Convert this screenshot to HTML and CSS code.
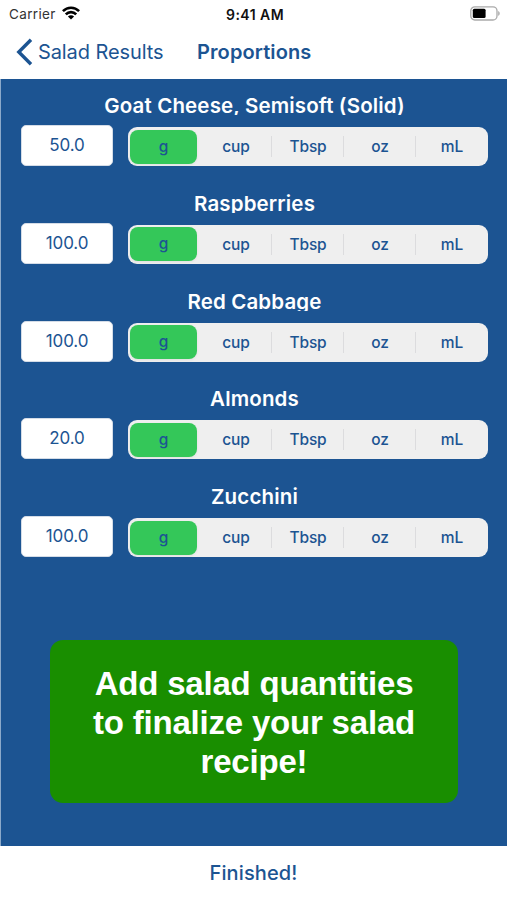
FILE: index.html
```html
<!DOCTYPE html>
<html lang="en">
<head>
<meta charset="utf-8">
<title>Proportions</title>
<link rel="stylesheet" href="styles.css">
</head>
<body>
<div class="screen">
  <header class="top">
    <div class="status">
      <div class="carrier"><span>Carrier</span>
        <svg class="wifi" width="18" height="14" viewBox="0 0 18 14" fill="none" stroke="#000" stroke-width="2.6"><path d="M.9 5.2C5.5.6 12.5.6 17.1 5.2"/><path d="M3.8 8.4c2.9-3 7.5-3 10.4 0"/><path d="M9 13.6 5.9 10.6c1.7-1.7 4.5-1.7 6.2 0z" fill="#000" stroke="none"/></svg>
      </div>
      <span class="clock">9:41 AM</span>
      <svg class="battery" width="31" height="15" viewBox="0 0 31 15"><rect x=".8" y=".8" width="26.2" height="13.2" rx="4" fill="#fff" stroke="#aaa" stroke-width="1.3"/><rect x="2.8" y="2.8" width="12.8" height="9.2" rx="1.5"/><path d="M28.2 5v4.8c2-.8 2-4 0-4.8z" fill="#aaa"/></svg>
    </div>
    <nav class="nav">
      <a class="back"><svg width="17" height="28" viewBox="0 0 17 28" fill="none" stroke="#1c5492" stroke-width="3.4"><path d="M15 1.8 2.8 14 15 26.2"/></svg><span>Salad Results</span></a>
      <h1>Proportions</h1>
    </nav>
  </header>
  <main>
    <section class="item"><h2>Goat Cheese, Semisoft (Solid)</h2><div class="controls"><div class="amount">50.0</div><div class="units"><span class="on">g</span><span>cup</span><span>Tbsp</span><span>oz</span><span>mL</span></div></div></section>
    <section class="item"><h2>Raspberries</h2><div class="controls"><div class="amount">100.0</div><div class="units"><span class="on">g</span><span>cup</span><span>Tbsp</span><span>oz</span><span>mL</span></div></div></section>
    <section class="item"><h2>Red Cabbage</h2><div class="controls"><div class="amount">100.0</div><div class="units"><span class="on">g</span><span>cup</span><span>Tbsp</span><span>oz</span><span>mL</span></div></div></section>
    <section class="item"><h2>Almonds</h2><div class="controls"><div class="amount">20.0</div><div class="units"><span class="on">g</span><span>cup</span><span>Tbsp</span><span>oz</span><span>mL</span></div></div></section>
    <section class="item"><h2>Zucchini</h2><div class="controls"><div class="amount">100.0</div><div class="units"><span class="on">g</span><span>cup</span><span>Tbsp</span><span>oz</span><span>mL</span></div></div></section>
    <div class="notice"><p>Add salad quantities<br>to finalize your salad<br>recipe!</p></div>
  </main>
  <footer>Finished!</footer>
</div>
</body>
</html>
```
FILE: styles.css
```css
* { box-sizing: border-box; }
body { margin: 0; background: #fff; font-family: Inter, "Liberation Sans", sans-serif; color: #1c5492; }
h1, h2, p { margin: 0; }
svg { display: block; }
.screen { width: 507px; height: 900px; display: flex; flex-direction: column; overflow: hidden; }
.top { height: 79px; }
.status { height: 28px; display: grid; grid-template-columns: 1fr auto 1fr; align-items: center; color: #111; font-size: 13.5px; padding: 0 6px 0 9px; }
.carrier { display: flex; align-items: center; gap: 6px; letter-spacing: .35px; color: #333; }
.wifi { margin-top: -2px; }
.clock { font-weight: 600; font-size: 14px; letter-spacing: .45px; }
.battery { justify-self: end; margin-top: -2px; }
.nav { height: 51px; display: flex; align-items: flex-start; padding-left: 16px; line-height: 28px; }
.back { display: flex; width: 181px; gap: 5px; font-size: 20px; padding-top: 10px; letter-spacing: -.1px; }
.back svg { flex: none; }
.back span { white-space: nowrap; }
.back svg, .back span { position: relative; }
h1 { font-size: 20px; font-weight: 600; line-height: 28px; padding-top: 10px; letter-spacing: .1px; }
main { height: 767px; background: #1c5492; border-left: 1px solid #8ba9ca; }
.item { height: 97.75px; padding: 14px 19px 0 20px; }
h2 { height: 22px; line-height: 26px; overflow: hidden; text-align: center; color: #fff; font-size: 20.5px; font-weight: 600; letter-spacing: .15px; }
.controls { display: flex; gap: 15px; margin-top: 10px; }
.amount { width: 92px; height: 41px; line-height: 39px; background: #fff; border: 1px solid #d4dce7; border-radius: 5px; text-align: center; font-size: 17px; letter-spacing: -.1px; }
.units { width: 360px; height: 39px; margin-top: 2px; background: #efefef; border-radius: 9px; display: grid; grid-template-columns: repeat(5, 1fr); align-items: center; text-align: center; font-size: 15.5px; font-weight: 500; letter-spacing: -.1px; }
.units span { line-height: 21px; }
.units span + span + span { border-left: 1px solid #dcdcde; margin-left: -1px; }
.units .on { background: #34c759; height: 34px; line-height: 34px; border-radius: 8px; margin: 0 3px 0 2px; box-shadow: 0 1px 3px #0001; }
.notice { width: 408px; height: 163px; margin: 72.5px 0 0 49px; padding-top: 2px; background: #198e00; border-radius: 13px; display: flex; align-items: center; justify-content: center; text-align: center; color: #fff; font: bold 33px/39px "Liberation Sans", sans-serif; letter-spacing: -.2px; }
footer { height: 54px; text-align: center; line-height: 55px; font-size: 20px; font-weight: 550; letter-spacing: .1px; }
```
